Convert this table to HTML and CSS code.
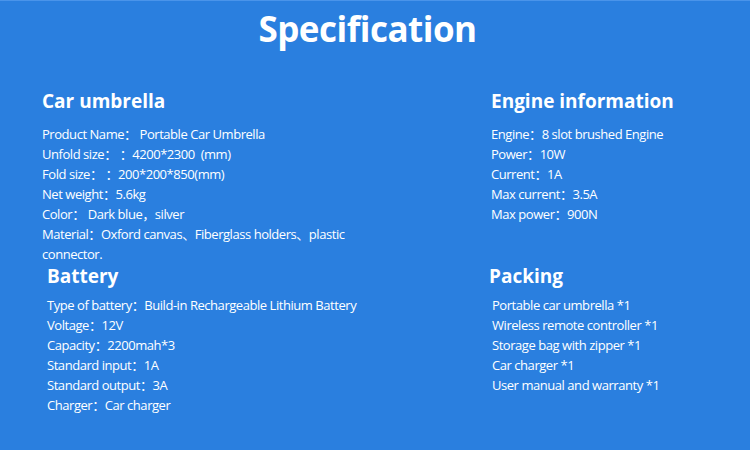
FILE: index.html
```html
<!DOCTYPE html>
<html>
<head>
<meta charset="utf-8">
<link rel="stylesheet" href="styles.css">
</head>
<body>
<div class="page">
  <h1 class="title">Specification</h1>
  <div class="grid">
    <section class="sec sec-car">
      <h2 class="head">Car umbrella</h2>
      <ul class="list">
        <li>Product Name：&nbsp;Portable Car Umbrella</li>
        <li>Unfold size：&nbsp;：4200*2300 &nbsp;(mm)</li>
        <li>Fold size：&nbsp;：200*200*850(mm)</li>
        <li>Net weight：5.6kg</li>
        <li>Color：&nbsp;Dark blue，silver</li>
        <li>Material：Oxford canvas、Fiberglass holders、plastic connector.</li>
      </ul>
    </section>
    <section class="sec sec-engine">
      <h2 class="head">Engine information</h2>
      <ul class="list">
        <li>Engine：8 slot brushed Engine</li>
        <li>Power：10W</li>
        <li>Current：1A</li>
        <li>Max current：3.5A</li>
        <li>Max power：900N</li>
      </ul>
    </section>
    <section class="sec sec-battery">
      <h2 class="head">Battery</h2>
      <ul class="list">
        <li>Type of battery：Build-in Rechargeable Lithium Battery</li>
        <li>Voltage：12V</li>
        <li>Capacity：2200mah*3</li>
        <li>Standard input：1A</li>
        <li>Standard output：3A</li>
        <li>Charger：Car charger</li>
      </ul>
    </section>
    <section class="sec sec-packing">
      <h2 class="head">Packing</h2>
      <ul class="list">
        <li>Portable car umbrella *1</li>
        <li>Wireless remote controller *1</li>
        <li>Storage bag with zipper *1</li>
        <li>Car charger *1</li>
        <li>User manual and warranty *1</li>
      </ul>
    </section>
  </div>
</div>
</body>
</html>
```
FILE: styles.css
```css
* { box-sizing: border-box; }
html, body { margin: 0; padding: 0; }
body {
  width: 750px;
  height: 450px;
  background: #2a7fdf;
  border-top: 1px solid #4a94ea;
  color: #ffffff;
  font-family: "Open Sans", "Noto Sans CJK SC", sans-serif;
  overflow: hidden;
}
.page {
  padding-top: 4px;
}
.title {
  margin: 0;
  padding-right: 15px;
  text-align: center;
  font-size: 35px;
  line-height: 48px;
  font-weight: 700;
  letter-spacing: -0.5px;
}
.grid {
  display: grid;
  grid-template-columns: 449px 1fr;
  grid-template-rows: 175px auto;
  padding-top: 36px;
  padding-left: 42px;
}
.head {
  margin: 0 0 11px;
  font-size: 19px;
  line-height: 24px;
  font-weight: 700;
}
.sec-battery .head, .sec-packing .head { margin-bottom: 7px; }
.list {
  list-style: none;
  margin: 0;
  padding: 0;
  font-size: 13px;
  line-height: 20px;
  letter-spacing: -0.45px;
}
.sec-car .list { width: 320px; }
.sec-battery { padding-left: 5px; }
.sec-packing .head { margin-left: -2px; }
.sec-packing .list { padding-left: 1px; }
```
